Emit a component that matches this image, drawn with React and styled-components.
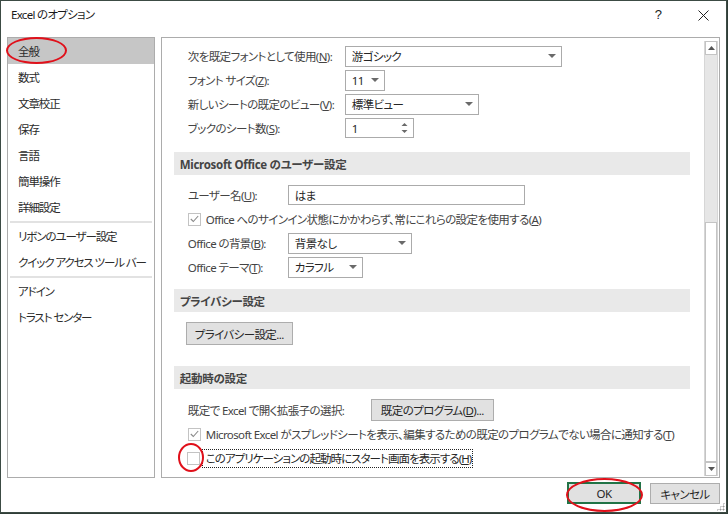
import React from 'react';
import styled, { createGlobalStyle } from 'styled-components';

const Global = createGlobalStyle`
  html, body {
    margin: 0;
    padding: 0;
    background: #2f3d36;
  }
  * {
    box-sizing: border-box;
  }
`;

const Window = styled.div`
  position: relative;
  width: 727px;
  height: 513px;
  background: #ffffff;
  border: 1px solid #3c4b44;
  display: flex;
  flex-direction: column;
  font-family: 'Noto Sans', 'Noto Sans CJK JP', sans-serif;
  font-feature-settings: 'palt';
  font-size: 11.5px;
  letter-spacing: -0.6px;
  color: #262626;
  overflow: hidden;
`;

const TitleBar = styled.div`
  height: 36px;
  display: flex;
  align-items: flex-start;
  padding: 5px 0 0 10px;
  line-height: 18px;
`;

const Title = styled.div`
  flex: 1;
  color: #1a1a1a;
  letter-spacing: -0.7px;
`;

const TitleButton = styled.div`
  width: ${props => props.w}px;
  height: 18px;
  display: flex;
  align-items: center;
  justify-content: center;
  font-family: 'Liberation Sans', sans-serif;
  font-size: 13px;
  color: #222;
`;

const Main = styled.div`
  height: 441px;
  display: flex;
  gap: 6px;
  padding: 0 6px;
`;

const Nav = styled.div`
  width: 148px;
  border: 1px solid #acacac;
  display: flex;
  flex-direction: column;
`;

const NavItem = styled.div`
  height: 26px;
  display: flex;
  align-items: center;
  padding-left: 10px;
  white-space: nowrap;
  letter-spacing: -1.1px;
  background: ${props => (props.active ? '#c6c6c6' : 'transparent')};
  color: #2b2b2b;
`;

const NavSep = styled.div`
  height: 3px;
  margin: 0 2px;
  border-top: 1px solid #ffffff;
  background: #e2e2e2;
`;

const Panel = styled.div`
  width: 560px;
  border: 1px solid #acacac;
  display: flex;
`;

const Content = styled.div`
  flex: 1;
  min-width: 0;
  overflow: hidden;
  padding: 6px 14px 0 12px;
  display: flex;
  flex-direction: column;
`;

const Row = styled.div`
  height: 24px;
  flex: none;
  display: flex;
  align-items: center;
  padding-left: ${props => props.pl || 14}px;
  margin-top: ${props => props.mt || 0}px;
`;

const Label = styled.div`
  width: ${props => props.w}px;
  flex: none;
  color: #444444;
  white-space: nowrap;
`;

const U = styled.span`
  text-decoration: underline;
`;

const Select = styled.div`
  width: ${props => props.w}px;
  height: ${props => props.h || 21}px;
  flex: none;
  border: 1px solid #ababab;
  background: #fff;
  display: flex;
  align-items: center;
  padding-left: 6px;
  padding-right: 5px;
  color: #262626;
`;

const SelectText = styled.div`
  flex: 1;
  white-space: nowrap;
`;

const Arrow = () => (
  <svg width="8" height="5" viewBox="0 0 8 5">
    <path d="M0 0 L8 0 L4 4 Z" fill="#6a6a6a" />
  </svg>
);

const Spin = () => (
  <svg width="7" height="12" viewBox="0 0 7 12">
    <path d="M0.5 4 L6.5 4 L3.5 1 Z" fill="#6a6a6a" />
    <path d="M0.5 8 L6.5 8 L3.5 11 Z" fill="#6a6a6a" />
  </svg>
);

const Header = styled.div`
  height: 23px;
  flex: none;
  background: #e9e9e9;
  margin-top: ${props => props.mt || 0}px;
  display: flex;
  align-items: center;
  padding-left: 6px;
  font-size: 11.5px;
  letter-spacing: -0.3px;
  font-weight: bold;
  color: #444444;
`;

const Button = styled.div`
  height: ${props => props.h || 23}px;
  padding: 0 ${props => props.px || 8}px;
  border: 1px solid #adadad;
  background: #e1e1e1;
  display: inline-flex;
  align-items: center;
  justify-content: center;
  color: #262626;
  white-space: nowrap;
`;

const ButtonRow = styled.div`
  flex: none;
  padding-left: 12px;
  margin-top: ${props => props.mt || 0}px;
  display: flex;
`;

const Box = styled.div`
  width: 13px;
  height: 13px;
  border: 1px solid #c3c3c3;
  background: #fff;
  display: flex;
  align-items: center;
  justify-content: center;
  flex: none;
  margin-right: ${props => props.mr || 5}px;
`;

const Check = () => (
  <svg width="9" height="8" viewBox="0 0 9 8">
    <path d="M0.8 4 L3.3 6.5 L8.2 1" fill="none" stroke="#8a8a8a" strokeWidth="1.1" />
  </svg>
);

const CheckText = styled.div`
  color: #444444;
  white-space: nowrap;
`;

const FocusText = styled.div`
  color: #262626;
  white-space: nowrap;
  letter-spacing: -0.95px;
  border: 1px dotted #222;
  padding: 0 1px 0 3px;
  height: 19px;
  display: flex;
  align-items: center;
`;

const Scroll = styled.div`
  width: 14px;
  flex: none;
  margin: 3px 1px 1px 0;
  display: flex;
  flex-direction: column;
  border-left: 1px solid #d6d6d6;
  border-right: 1px solid #d6d6d6;
`;

const ScrollBtn = styled.div`
  height: 14px;
  border: 1px solid #c4c4c4;
  background: #fff;
  display: flex;
  align-items: center;
  justify-content: center;
`;

const Track = styled.div`
  flex: 1;
  background: #e6e6e6;
`;

const Thumb = styled.div`
  height: 240px;
  border: 1px solid #c4c4c4;
  background: #fff;
`;

const Tri = ({ up }) => (
  <svg width="7" height="4" viewBox="0 0 7 4">
    <path d={up ? 'M0 4 L7 4 L3.5 0 Z' : 'M0 0 L7 0 L3.5 4 Z'} fill="#555" />
  </svg>
);

const Footer = styled.div`
  flex: 1;
  display: flex;
  justify-content: flex-end;
  align-items: flex-start;
  gap: 9px;
  padding: 4px 6px 0 0;
`;

const DlgButton = styled.div`
  width: ${props => props.w}px;
  height: ${props => props.h}px;
  margin-top: ${props => props.mt || 0}px;
  background: #e1e1e1;
  border: ${props => (props.primary ? '2px solid #217346' : '1px solid #adadad')};
  display: flex;
  align-items: center;
  justify-content: center;
  color: #262626;
`;

const Ring = styled.div`
  position: absolute;
  left: ${props => props.x}px;
  top: ${props => props.y}px;
  width: ${props => props.w}px;
  height: ${props => props.h}px;
  border: 2px solid #e0101a;
  border-radius: 50%;
  pointer-events: none;
`;

const Grip = styled.div`
  position: absolute;
  right: 1px;
  bottom: 1px;
  width: 9px;
  height: 9px;
  background:
    radial-gradient(circle, #9a9a9a 0.8px, transparent 1.2px) 0 0 / 3px 3px;
  clip-path: polygon(100% 0, 100% 100%, 0 100%);
`;

const navItems = [
  ['全般', true],
  ['数式'],
  ['文章校正'],
  ['保存'],
  ['言語'],
  ['簡単操作'],
  ['詳細設定'],
  'sep',
  ['リボンのユーザー設定'],
  ['クイック アクセス ツール バー'],
  'sep',
  ['アドイン'],
  ['トラスト センター'],
];

export default function App() {
  return (
    <>
      <Global />
      <Window>
        <TitleBar>
          <Title>Excel のオプション</Title>
          <TitleButton w={20}>?</TitleButton>
          <TitleButton w={26} style={{ marginLeft: 22, marginRight: 10 }}>
            <svg width="11" height="11" viewBox="0 0 11 11">
              <path d="M0.5 0.5 L10.5 10.5 M10.5 0.5 L0.5 10.5" stroke="#222" strokeWidth="1" />
            </svg>
          </TitleButton>
        </TitleBar>

        <Main>
          <Nav>
            {navItems.map((it, i) =>
              it === 'sep' ? (
                <NavSep key={i} />
              ) : (
                <NavItem key={i} active={it[1]}>{it[0]}</NavItem>
              )
            )}
          </Nav>

          <Panel>
            <Content>
              <Row>
                <Label w={157}>次を既定フォントとして使用(<U>N</U>):</Label>
                <Select w={217}><SelectText>游ゴシック</SelectText><Arrow /></Select>
              </Row>
              <Row>
                <Label w={157}>フォント サイズ(<U>Z</U>):</Label>
                <Select w={40}><SelectText>11</SelectText><Arrow /></Select>
              </Row>
              <Row>
                <Label w={157}>新しいシートの既定のビュー(<U>V</U>):</Label>
                <Select w={134}><SelectText>標準ビュー</SelectText><Arrow /></Select>
              </Row>
              <Row>
                <Label w={157}>ブックのシート数(<U>S</U>):</Label>
                <Select w={69} h={20}><SelectText>1</SelectText><Spin /></Select>
              </Row>

              <Header mt={12}>Microsoft Office のユーザー設定</Header>
              <Row mt={8}>
                <Label w={100}>ユーザー名(<U>U</U>):</Label>
                <Select w={237} h={20}><SelectText>はま</SelectText></Select>
              </Row>
              <Row>
                <Box><Check /></Box>
                <CheckText>Office へのサインイン状態にかかわらず、常にこれらの設定を使用する(<U>A</U>)</CheckText>
              </Row>
              <Row>
                <Label w={100}>Office の背景(<U>B</U>):</Label>
                <Select w={124}><SelectText>背景なし</SelectText><Arrow /></Select>
              </Row>
              <Row>
                <Label w={100}>Office テーマ(<U>T</U>):</Label>
                <Select w={75}><SelectText>カラフル</SelectText><Arrow /></Select>
              </Row>

              <Header mt={10}>プライバシー設定</Header>
              <ButtonRow mt={10}>
                <Button h={23} px={8}>プライバシー設定...</Button>
              </ButtonRow>

              <Header mt={21}>起動時の設定</Header>
              <Row mt={9}>
                <Label w={183}>既定で Excel で開く拡張子の選択:</Label>
                <Button h={22} px={9}>既定のプログラム(<U>D</U>)...</Button>
              </Row>
              <Row>
                <Box><Check /></Box>
                <CheckText>Microsoft Excel がスプレッドシートを表示、編集するための既定のプログラムでない場合に通知する(<U>T</U>)</CheckText>
              </Row>
              <Row pl={13}>
                <Box mr={2} />
                <FocusText>このアプリケーションの起動時にスタート画面を表示する(<U>H</U>)</FocusText>
              </Row>
            </Content>

            <Scroll>
              <ScrollBtn><Tri up /></ScrollBtn>
              <Track />
              <Thumb />
              <ScrollBtn><Tri /></ScrollBtn>
            </Scroll>
          </Panel>
        </Main>

        <Footer>
          <DlgButton primary w={74} h={22}>OK</DlgButton>
          <DlgButton w={70} h={21} mt={1}>キャンセル</DlgButton>
        </Footer>

        <Ring x={5} y={36} w={61} h={27} />
        <Ring x={177} y={442} w={26} h={29} />
        <Ring x={565} y={477} w={77} h={34} />
        <Grip />
      </Window>
    </>
  );
}
